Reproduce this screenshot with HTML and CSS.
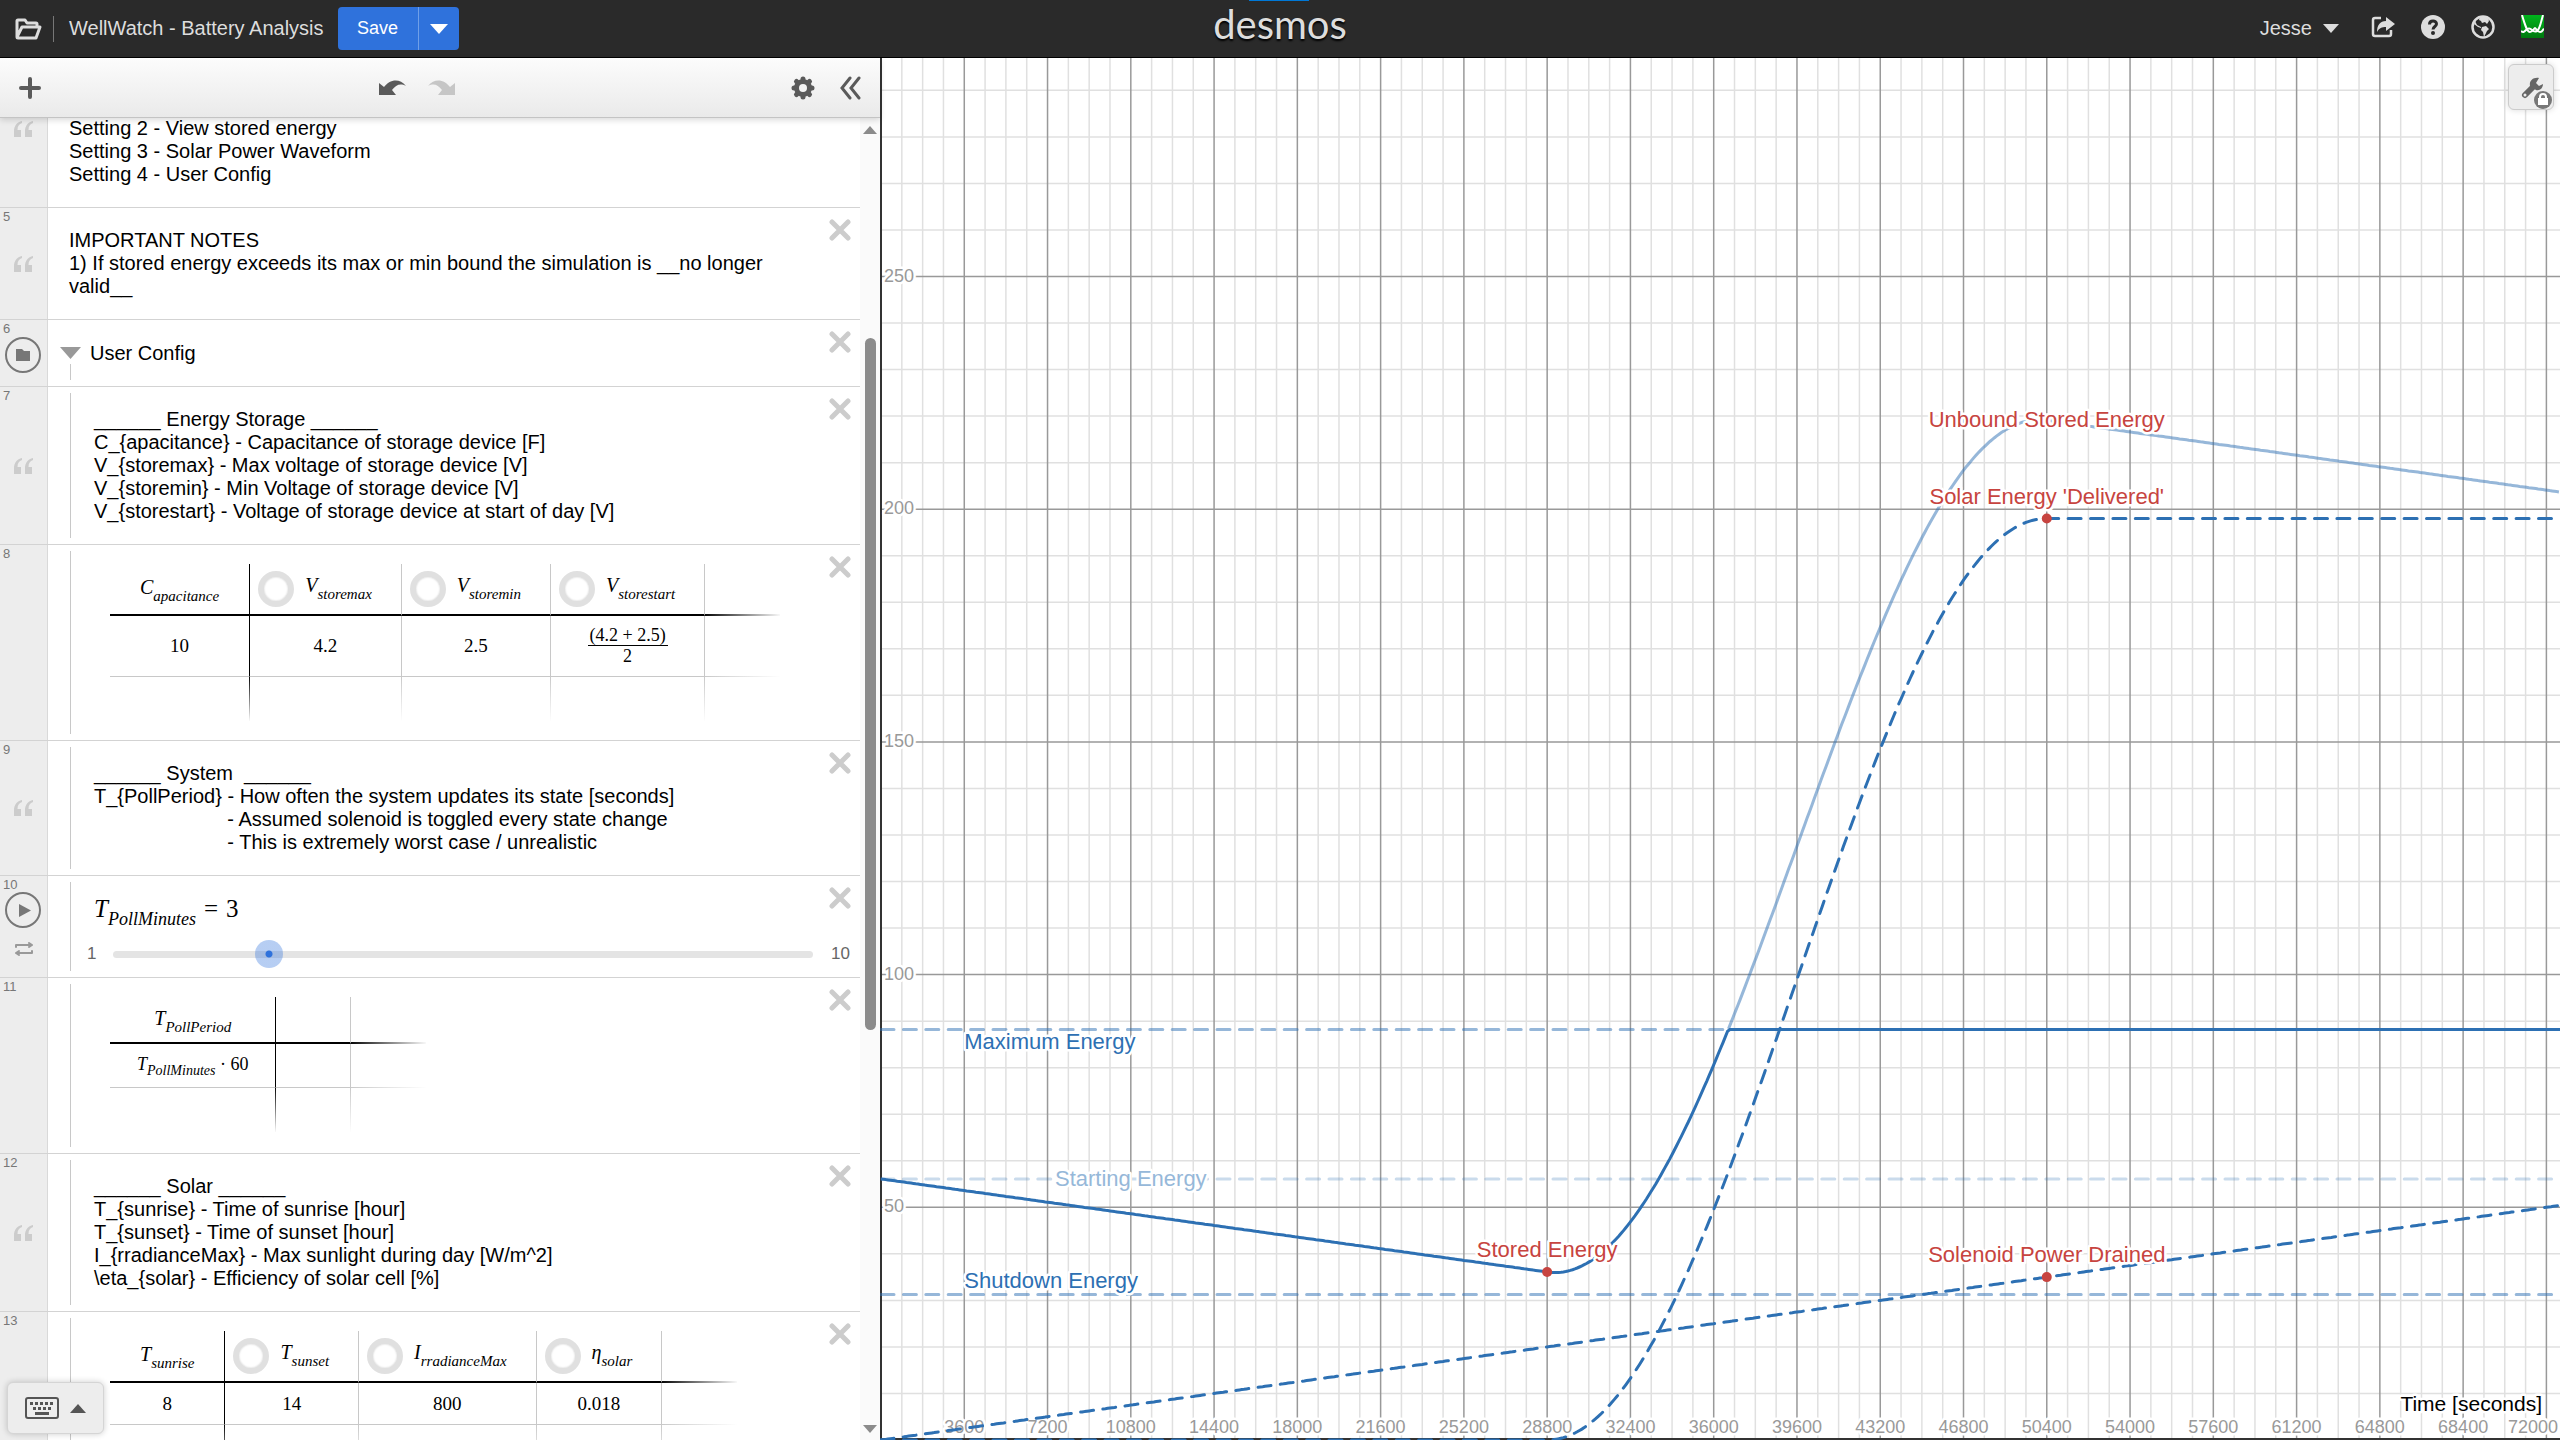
FILE: index.html
```
<!DOCTYPE html>
<html lang="en">
<head>
    <meta charset="UTF-8">
    <meta name="viewport" content="width=device-width, initial-scale=1.0">
    <title>WellWatch - Battery Analysis</title>
    <link rel="stylesheet" href="styles.css">
</head>
<body>
    <!-- Shared icons -->
    <svg class="sprite" aria-hidden="true">
        <symbol id="close" viewBox="0 0 22 22"><path d="M3 3L19 19M19 3L3 19" stroke="currentColor" stroke-width="5" stroke-linecap="round"/></symbol>
        <symbol id="quote" viewBox="0 0 19 16"><path d="M8 0C3 1 0 5 0 10v6h7V9H3.500C3.500 5 5 3 8 2zM19 0c-5 1-8 5-8 10v6h7V9h-3.500c0-4 1.500-6 4.500-7z" fill="currentColor"/></symbol>
    </svg>

    <header class="header">
        <div class="accent"></div>
        <div class="header-left">
            <button class="icon-button" aria-label="Open graph">
                <svg width="28" height="22" viewBox="0 0 28 22" fill="none" stroke="currentColor" stroke-width="3" stroke-linejoin="round"><path d="M3 19V3q0-1 1-1h7l2 3h9q1 0 1 1v3M3 19L8 9h18l-4 11H4q-1 0-1-1z"/></svg>
            </button>
            <span class="divider"></span>
            <span class="graph-title">WellWatch - Battery Analysis</span>
            <div class="save-group">
                <button class="save">Save</button>
                <button class="save-more" aria-label="More save options"><svg width="18" height="10" viewBox="0 0 18 10"><path d="M0 0h18L9 10z" fill="currentColor"/></svg></button>
            </div>
        </div>
        <div class="logo">desmos</div>
        <div class="header-right">
            <button class="user">Jesse <svg width="16" height="9" viewBox="0 0 16 9"><path d="M0 0h16L8 9z" fill="currentColor"/></svg></button>
            <button class="icon-button" aria-label="Share">
                <svg width="24" height="24" viewBox="0 0 24 24"><path d="M10 3H4Q2 3 2 5v14q0 2 2 2h14q2 0 2-2v-4" fill="none" stroke="currentColor" stroke-width="2.500"/><path d="M15 2l9 7-9 7v-4c-4 0-7 1-9 5 0-7 3-11 9-11z" fill="currentColor"/></svg>
            </button>
            <button class="icon-button" aria-label="Help">
                <svg width="24" height="24" viewBox="0 0 24 24"><circle cx="12" cy="12" r="12" fill="currentColor"/><path d="M8.500 9.500C8.500 5 15.500 5 15.500 9c0 2.500-3.500 2.500-3.500 5.500" fill="none" stroke="#2a2a2a" stroke-width="3"/><circle cx="12" cy="18" r="2" fill="#2a2a2a"/></svg>
            </button>
            <button class="icon-button" aria-label="Language">
                <svg width="24" height="24" viewBox="0 0 24 24"><circle cx="12" cy="12" r="10.500" fill="none" stroke="currentColor" stroke-width="2.500"/><path d="M9 1l5 1 3 1 1 3-2 3-2-2-3 1-1-2-2-1zM4 6l2 4 4 2 0 1-3-1-4-3zM11 12l4-1 3 3-2 2-3 6-1-5-2-2z" fill="currentColor"/></svg>
            </button>
            <a class="avatar" href="#" aria-label="Desmos">
                <svg width="23" height="23" viewBox="0 0 23 23" fill="none" stroke="#fff" stroke-width="2"><defs><linearGradient id="green" x1="0" y1="0" x2="0" y2="1"><stop offset="0" stop-color="#00b51c"/><stop offset="1" stop-color="#00790f"/></linearGradient></defs><path d="M0 0h23v23H0z" fill="url(#green)" stroke="none"/><path d="M1 0C4 10 6 17 9 17s4-4 5-4 2 4 5 4 2-2 4-3M0 16c2 2 3 1 5-1s4-2 6 0 3 2 5 1C19 14 20 7 22 0"/></svg>
            </a>
        </div>
    </header>

    <main class="calculator">
        <section class="panel">
            <div class="toolbar">
                <button class="tool" aria-label="Add item"><svg width="24" height="24" viewBox="0 0 24 24"><path d="M12 3v18M3 12h18" stroke="currentColor" stroke-width="4" stroke-linecap="round"/></svg></button>
                <div class="history">
                    <button class="tool" aria-label="Undo"><svg width="27" height="17" viewBox="0 0 27 17"><path d="M0 3l5 4C10 0 20-3 27 6 21 3 17 5 13 10l4 5H0z" fill="currentColor"/></svg></button>
                    <button class="tool disabled" aria-label="Redo"><svg width="27" height="17" viewBox="0 0 27 17"><path d="M27 3l-5 4C17 0 7-3 0 6c6-3 10-1 14 4l-4 5h17z" fill="currentColor"/></svg></button>
                </div>
                <div class="panel-actions">
                    <button class="tool" aria-label="Edit list"><svg width="24" height="24" viewBox="-12 -12 24 24"><path d="M0-9V9M-9 0H9M-6.500-6.500L6.500 6.500M6.500-6.500L-6.500 6.500" stroke="currentColor" stroke-width="5" stroke-linecap="round"/><circle r="6.500" fill="none" stroke="currentColor" stroke-width="5"/><circle r="4" fill="#f3f3f3"/></svg></button>
                    <button class="tool" aria-label="Hide list"><svg width="22" height="24" viewBox="0 0 22 24"><path d="M11 2L3 12l8 10M20 2l-8 10 8 10" fill="none" stroke="currentColor" stroke-width="3" stroke-linecap="round"/></svg></button>
                </div>
            </div>

            <div class="expressions">
                <div class="list">
                    <article class="item scrolled">
                        <div class="gutter"><svg class="quote"><use href="#quote"/></svg></div>
                        <div class="body">
                            <p class="note">Setting 2 - View stored energy
Setting 3 - Solar Power Waveform
Setting 4 - User Config</p>
                        </div>
                    </article>

                    <article class="item">
                        <div class="gutter"><span class="number">5</span><svg class="quote"><use href="#quote"/></svg></div>
                        <div class="body">
                            <p class="note">IMPORTANT NOTES
1) If stored energy exceeds its max or min bound the simulation is __no longer valid__</p>
                        </div>
                        <button class="close" aria-label="Delete 5"><svg><use href="#close"/></svg></button>
                    </article>

                    <article class="item folder">
                        <div class="gutter"><span class="number">6</span>
                            <button class="round" aria-label="Hide this folder"><svg width="14" height="12" viewBox="0 0 14 12"><path d="M0 0h6l2 2h6v10H0z" fill="currentColor"/></svg></button>
                        </div>
                        <div class="body">
                            <button class="arrow" aria-label="Collapse folder"><svg width="21" height="12" viewBox="0 0 21 12"><path d="M0 0h21L10.500 12z" fill="currentColor"/></svg></button>
                            <span>User Config</span>
                        </div>
                        <button class="close" aria-label="Delete 6"><svg><use href="#close"/></svg></button>
                    </article>

                    <article class="item nested">
                        <div class="gutter"><span class="number">7</span><svg class="quote"><use href="#quote"/></svg></div>
                        <div class="body">
                            <p class="note">______ Energy Storage ______
C_{apacitance} - Capacitance of storage device [F]
V_{storemax} - Max voltage of storage device [V]
V_{storemin} - Min Voltage of storage device [V]
V_{storestart} - Voltage of storage device at start of day [V]</p>
                        </div>
                        <button class="close" aria-label="Delete 7"><svg><use href="#close"/></svg></button>
                    </article>

                    <article class="item nested">
                        <div class="gutter"><span class="number">8</span></div>
                        <div class="body">
                            <table class="data tall">
                                <thead>
                                    <tr>
                                        <th><i>C<sub>apacitance</sub></i></th>
                                        <th><button class="plot" aria-label="Plot V storemax"></button><i>V<sub>storemax</sub></i></th>
                                        <th><button class="plot" aria-label="Plot V storemin"></button><i>V<sub>storemin</sub></i></th>
                                        <th><button class="plot" aria-label="Plot V storestart"></button><i>V<sub>storestart</sub></i></th>
                                        <th></th>
                                    </tr>
                                </thead>
                                <tbody>
                                    <tr>
                                        <td>10</td><td>4.2</td><td>2.5</td>
                                        <td><span class="fraction"><span>(4.2 + 2.5)</span><span>2</span></span></td>
                                        <td></td>
                                    </tr>
                                    <tr><td></td><td></td><td></td><td></td><td></td></tr>
                                </tbody>
                            </table>
                        </div>
                        <button class="close" aria-label="Delete 8"><svg><use href="#close"/></svg></button>
                    </article>

                    <article class="item nested">
                        <div class="gutter"><span class="number">9</span><svg class="quote"><use href="#quote"/></svg></div>
                        <div class="body">
                            <p class="note">______ System  ______
T_{PollPeriod} - How often the system updates its state [seconds]
                        - Assumed solenoid is toggled every state change
                        - This is extremely worst case / unrealistic</p>
                        </div>
                        <button class="close" aria-label="Delete 9"><svg><use href="#close"/></svg></button>
                    </article>

                    <article class="item nested">
                        <div class="gutter"><span class="number">10</span>
                            <button class="round play" aria-label="Play"><svg width="12" height="13" viewBox="0 0 12 13"><path d="M0 0l12 6.500L0 13z" fill="currentColor"/></svg></button>
                            <button class="loop" aria-label="Animation mode"><svg width="18" height="14" viewBox="0 0 18 14" fill="none" stroke="currentColor" stroke-width="2" stroke-linecap="round" stroke-linejoin="round"><path d="M1 5V3h15M14 1l3 2-3 2M17 9v2H2M4 9l-3 2 3 2"/></svg></button>
                        </div>
                        <div class="body slider-body">
                            <div class="formula"><i>T<sub>PollMinutes</sub></i><span class="equals">=</span>3</div>
                            <div class="slider">
                                <label for="poll">1</label>
                                <div class="track"><input type="range" id="poll" min="1" max="10" value="3"></div>
                                <span>10</span>
                            </div>
                        </div>
                        <button class="close" aria-label="Delete 10"><svg><use href="#close"/></svg></button>
                    </article>

                    <article class="item nested">
                        <div class="gutter"><span class="number">11</span></div>
                        <div class="body">
                            <table class="data compact">
                                <thead>
                                    <tr><th><i>T<sub>PollPeriod</sub></i></th><th></th><th></th></tr>
                                </thead>
                                <tbody>
                                    <tr><td><i>T<sub>PollMinutes</sub></i> · 60</td><td></td><td></td></tr>
                                    <tr><td></td><td></td><td></td></tr>
                                </tbody>
                            </table>
                        </div>
                        <button class="close" aria-label="Delete 11"><svg><use href="#close"/></svg></button>
                    </article>

                    <article class="item nested">
                        <div class="gutter"><span class="number">12</span><svg class="quote"><use href="#quote"/></svg></div>
                        <div class="body">
                            <p class="note">______ Solar ______
T_{sunrise} - Time of sunrise [hour]
T_{sunset} - Time of sunset [hour]
I_{rradianceMax} - Max sunlight during day [W/m^2]
\eta_{solar} - Efficiency of solar cell [%]</p>
                        </div>
                        <button class="close" aria-label="Delete 12"><svg><use href="#close"/></svg></button>
                    </article>

                    <article class="item nested">
                        <div class="gutter"><span class="number">13</span></div>
                        <div class="body">
                            <table class="data">
                                <thead>
                                    <tr>
                                        <th><i>T<sub>sunrise</sub></i></th>
                                        <th><button class="plot" aria-label="Plot T sunset"></button><i>T<sub>sunset</sub></i></th>
                                        <th><button class="plot" aria-label="Plot I rradianceMax"></button><i>I<sub>rradianceMax</sub></i></th>
                                        <th><button class="plot" aria-label="Plot eta solar"></button><i>η<sub>solar</sub></i></th>
                                        <th></th>
                                    </tr>
                                </thead>
                                <tbody>
                                    <tr><td>8</td><td>14</td><td>800</td><td>0.018</td><td></td></tr>
                                    <tr><td></td><td></td><td></td><td></td><td></td></tr>
                                </tbody>
                            </table>
                        </div>
                        <button class="close" aria-label="Delete 13"><svg><use href="#close"/></svg></button>
                    </article>
                </div>

                <!-- Scrollbar -->
                <div class="scrollbar">
                    <svg width="14" height="8" viewBox="0 0 14 8"><path d="M0 8h14L7 0z" fill="currentColor"/></svg>
                    <div class="rail"><span class="before"></span><span class="thumb"></span><span class="after"></span></div>
                    <svg width="14" height="8" viewBox="0 0 14 8"><path d="M0 0h14L7 8z" fill="currentColor"/></svg>
                </div>
            </div>

            <button class="keypad" aria-label="Show keypad">
                <svg width="34" height="22" viewBox="0 0 34 22"><rect x="1" y="1" width="32" height="20" rx="2" fill="none" stroke="currentColor" stroke-width="2"/><path d="M5 6.500h24M8 11.500h18" stroke="currentColor" stroke-width="3" stroke-dasharray="3 2"/><path d="M10 16.500h14" stroke="currentColor" stroke-width="3"/></svg>
                <svg width="16" height="9" viewBox="0 0 16 9"><path d="M0 9h16L8 0z" fill="currentColor"/></svg>
            </button>
        </section>

        <section class="graph">
            <svg id="plot" role="img" aria-label="Stored energy over time"></svg>
            <button class="settings" aria-label="Graph settings">
                <svg width="32" height="32" viewBox="0 0 32 32"><path d="M5 18L13 10" stroke="currentColor" stroke-width="6" stroke-linecap="round"/><path d="M19 1c-6-1-10 3-9 8l6 4c4 1 7-2 7-6l-4 2-3-3z" fill="currentColor"/><circle cx="5" cy="18" r="1.500" fill="#ededed"/><circle cx="23" cy="23" r="9" fill="#777"/><path d="M20 22v-2q0-3 3-3t3 3v2" fill="none" stroke="#fff" stroke-width="2"/><path d="M18 21h10v7H18z" fill="#fff"/></svg>
            </button>
        </section>
    </main>

    <script src="script.js"></script>
</body>
</html>
```
FILE: styles.css
```
* {
    box-sizing: border-box;
}
body {
    font-family: "Liberation Sans", Arial, sans-serif;
    font-size: 20px;
    margin: 0;
    height: 100vh;
    color: #000;
    display: flex;
    flex-direction: column;
    overflow: hidden;
}
button {
    font: inherit;
    color: inherit;
    background: none;
    border: none;
    padding: 0;
    cursor: pointer;
}
button svg {
    display: block;
}
.sprite {
    display: none;
}

/* Header */
.header {
    position: relative;
    flex: none;
    display: grid;
    grid-template-columns: 1fr auto 1fr;
    align-items: center;
    height: 58px;
    background: #2a2a2a;
    border-bottom: 1px solid #000;
    color: #ddd;
}
.accent {
    position: absolute;
    top: 0;
    left: 50%;
    width: 60px;
    height: 1px;
    margin-left: -31px;
    background: #0078d7;
}
.header-left {
    display: flex;
    align-items: center;
    padding-left: 14px;
}
.divider {
    width: 1px;
    height: 26px;
    margin: 0 15px 0 11px;
    background: #777;
}
.save-group {
    display: flex;
    height: 43px;
    margin-left: 14px;
    background: #2f72dc;
    border-radius: 4px;
    color: #fff;
}
.save {
    width: 80px;
    font-size: 18px;
}
.save-more {
    width: 41px;
    border-left: 1px solid #6f9fe8;
    display: flex;
    align-items: center;
    justify-content: center;
}
.logo {
    font-family: Lato, sans-serif;
    font-size: 40px;
    line-height: 40px;
    padding-bottom: 10px;
    text-shadow: 0 2px 2px #000;
}
.header-right {
    display: flex;
    align-items: center;
    justify-content: flex-end;
    gap: 26px;
    padding: 0 16px 4px 0;
}
.user {
    display: flex;
    align-items: center;
    gap: 11px;
    margin-right: 6px;
    padding-top: 4px;
}
.avatar svg {
    display: block;
}

/* Expression panel */
.calculator {
    flex: 1;
    min-height: 0;
    display: grid;
    grid-template-columns: 11fr 21fr;
    grid-template-rows: 100%;
}
.panel {
    position: relative;
    display: flex;
    flex-direction: column;
    min-width: 0;
}
.toolbar {
    z-index: 1;
    flex: none;
    display: grid;
    grid-template-columns: 1fr auto 1fr;
    align-items: center;
    height: 60px;
    padding: 1px 19px 0 18px;
    background: linear-gradient(#fcfcfc, #eaeaea);
    border-bottom: 1px solid #c4c4c4;
    box-shadow: 0 2px 6px rgba(0, 0, 0, 0.15);
    color: #5a5a5a;
}
.history {
    display: flex;
    gap: 22px;
    margin-right: 46px;
}
.panel-actions {
    display: flex;
    justify-content: flex-end;
    gap: 24px;
}
.disabled {
    color: #c6c6c6;
}
.expressions {
    flex: 1;
    min-height: 0;
    display: flex;
}
.list {
    flex: 1;
    overflow: hidden;
}
.item {
    position: relative;
    display: flex;
    border-bottom: 1px solid #d3d3d3;
    background: #fff;
}
.gutter {
    position: relative;
    flex: none;
    width: 48px;
    background: #ededed;
    border-right: 1px solid #d9d9d9;
    color: #777;
    display: flex;
    align-items: center;
    justify-content: center;
}
.number {
    position: absolute;
    top: 2px;
    left: 3px;
    font-size: 13px;
    line-height: 14px;
}
.quote {
    width: 19px;
    height: 16px;
    color: #ccc;
}
.round {
    width: 36px;
    height: 36px;
    margin-right: 1px;
    border: 2px solid #777;
    border-radius: 50%;
    display: flex;
    align-items: center;
    justify-content: center;
}
.play {
    padding-left: 4px;
}
.body {
    flex: 1;
    padding: 21px 50px 21px 21px;
}
.note {
    margin: 0;
    line-height: 23px;
    white-space: pre-wrap;
}
.close {
    position: absolute;
    top: 11px;
    right: 9px;
    color: #ccc;
}
.close svg {
    width: 22px;
    height: 22px;
}
.scrolled {
    margin-top: -68px;
    min-height: 158px;
}
.scrolled .body {
    align-self: flex-end;
    padding-top: 0;
}
.nested .body {
    padding-left: 46px;
}
.nested::before,
.folder::before {
    content: "";
    position: absolute;
    top: 6px;
    bottom: 6px;
    left: 70px;
    width: 1px;
    background: #c8c8c8;
}
.folder::before {
    top: 44px;
}
.folder .body {
    display: flex;
    align-items: center;
    gap: 9px;
    padding-left: 12px;
    line-height: 24px;
}
.folder .round {
    margin-top: 4px;
}
.arrow {
    color: #999;
}

/* Formulas and tables */
.formula,
.data {
    font-family: "Liberation Serif", "Times New Roman", serif;
}
.formula {
    padding-left: 7px;
    font-size: 25px;
    line-height: 30px;
}
.equals {
    margin: 0 8px;
}
sub {
    font-size: 15px;
    line-height: 0;
    vertical-align: -7px;
}
.formula sub {
    font-size: 18px;
    vertical-align: -8px;
}
.data {
    margin: -2px 0 -2px 16px;
    border-spacing: 0;
    font-size: 19px;
    white-space: nowrap;
}
.data th,
.data td {
    height: 42px;
    padding: 0 29px;
    border: 0 solid #c8c8c8;
    border-width: 0 1px 1px 0;
    text-align: center;
    font-weight: normal;
}
.data th {
    height: 52px;
    padding-bottom: 3px;
    border-bottom: 2px solid #000;
    font-size: 20px;
}
.data th:first-child,
.data td:first-child {
    border-right-color: #000;
}
.data th:first-child {
    padding: 0 30px 3px;
}
.data th:nth-last-child(2):not(:first-child) {
    min-width: 75px;
}
.data th:last-child,
.data td:last-child {
    border-right: none;
    border-image: linear-gradient(to right, #c8c8c8, transparent) 1;
    padding: 0;
    width: 75px;
}
.data th:last-child {
    border-image: linear-gradient(to right, #000, transparent) 2;
}
.data tr:last-child td {
    height: 44px;
    border-bottom: none;
    border-image: linear-gradient(#c8c8c8, transparent) 1;
}
.data tr:last-child td:first-child {
    border-image: linear-gradient(#000, transparent) 1;
}
.data tr:last-child td:last-child {
    border-image: none;
}
.tall tbody tr:first-child td {
    height: 61px;
}
.compact {
    margin-bottom: 0;
}
.compact th {
    height: 47px;
}
.compact td {
    height: 44px;
    padding-bottom: 3px;
    font-size: 18px;
}
.compact td:first-child {
    padding: 0 27px 3px;
}
.compact td sub {
    font-size: 14px;
    vertical-align: -5px;
}
.plot {
    width: 36px;
    height: 36px;
    margin: 3px 11px 0 -21px;
    border: 6px solid #e0e0e0;
    border-radius: 50%;
    background: #fff;
    box-shadow: inset 0 0 2px #ccc;
    vertical-align: middle;
}
.fraction {
    display: inline-flex;
    flex-direction: column;
    margin: 0 -10px;
    padding-bottom: 2px;
    font-size: 18px;
    line-height: 20px;
}
.fraction span:first-child {
    padding: 0 2px;
    border-bottom: 1px solid #000;
}

/* Slider */
.nested .slider-body {
    padding: 18px 10px 9px 39px;
}
.slider {
    display: flex;
    align-items: center;
    margin-top: 16px;
    height: 28px;
    font-size: 17px;
    color: #666;
}
.track {
    flex: 1;
    display: flex;
    align-items: center;
    height: 7px;
    margin: 0 18px 0 17px;
    background: #e4e4e4;
    border-radius: 4px;
}
.track input {
    appearance: none;
    flex: 1;
    height: 28px;
    margin: 0 -14px;
    background: none;
}
.track input::-webkit-slider-thumb {
    appearance: none;
    width: 28px;
    height: 28px;
    border-radius: 50%;
    background: radial-gradient(circle, #2f72dc 3px, rgba(47, 114, 220, 0.35) 4px);
}
.loop {
    position: absolute;
    bottom: 21px;
    left: 15px;
    color: #999;
}
.play {
    margin-bottom: 33px;
}

/* Scrollbar */
.scrollbar {
    flex: none;
    width: 20px;
    display: flex;
    flex-direction: column;
    align-items: center;
    padding: 8px 0 7px;
    background: #fafafa;
    color: #8b8b8b;
}
.rail {
    flex: 1;
    display: flex;
    flex-direction: column;
    padding: 3px 0;
}
.rail .before {
    flex: 201;
}
.rail .thumb {
    flex: 691;
    width: 11px;
    background: #8b8b8b;
    border-radius: 6px;
}
.rail .after {
    flex: 391;
}
.keypad {
    position: absolute;
    left: 7px;
    bottom: 6px;
    height: 52px;
    padding: 0 17px;
    display: flex;
    align-items: center;
    gap: 11px;
    background: #ededed;
    border: 1px solid #d5d5d5;
    border-radius: 6px;
    box-shadow: 0 0 6px rgba(0, 0, 0, 0.2);
    color: #555;
}

/* Graph */
.graph {
    position: relative;
    min-width: 0;
    overflow: hidden;
}
#plot {
    display: block;
    width: 100%;
    height: 100%;
}
.settings {
    position: absolute;
    top: 6px;
    right: 6px;
    width: 46px;
    height: 46px;
    padding: 11px 0 0 11px;
    background: #ededed;
    border: 1px solid #ccc;
    border-radius: 6px;
    box-shadow: 0 0 6px rgba(0, 0, 0, 0.15);
    color: #666;
}
.minor {
    stroke: #e0e0e0;
    stroke-width: 1.5px;
}
.major {
    stroke: #999;
    stroke-width: 1.5px;
}
.axis {
    stroke: #333;
    stroke-width: 2px;
}
.curve {
    fill: none;
    stroke: #2d70b3;
    stroke-width: 3px;
}
.dashed {
    stroke-dasharray: 13 9.4;
    stroke-linecap: round;
}
.half {
    opacity: 0.5;
}
.faint {
    opacity: 0.25;
}
.point {
    fill: #c74440;
}
#plot text {
    font-size: 22px;
    stroke: #fff;
    stroke-width: 5px;
    stroke-linejoin: round;
    paint-order: stroke;
}
#plot .tick {
    font-size: 18px;
    fill: #999;
}
#plot .time {
    font-size: 21px;
    fill: #000;
}
.middle {
    text-anchor: middle;
}
.end {
    text-anchor: end;
}
.red {
    fill: #c74440;
}
.blue {
    fill: #2d70b3;
}
.pale {
    fill: #96b8d9;
}
```
FILE: script.js
```
const plot = document.getElementById("plot");

// Simulation values
const sunrise = 8 * 3600;
const sunset = 14 * 3600;
const maxEnergy = 88.2;
const startEnergy = 56.1;
const shutdownEnergy = 31.25;

// Viewport scale
const stepX = 83.27 / 3600;
const stepY = 4.654;

function drained(t) {
    return 35 * t / sunset;
}

function delivered(t) {
    if (t < sunrise) return 0;
    if (t > sunset) return 198;
    return 99 * (1 - Math.cos(Math.PI * (t - sunrise) / (sunset - sunrise)));
}

function unbound(t) {
    return startEnergy - drained(t) + delivered(t);
}

function draw() {
    const w = plot.clientWidth;
    const h = plot.clientHeight;
    const x = t => 1 + t * stepX;
    const y = e => h - e * stepY;
    const end = w / stepX;
    let out = "";

    const line = (x1, y1, x2, y2, cls) => {
        out += `<line x1="${x1}" y1="${y1}" x2="${x2}" y2="${y2}" class="${cls}"/>`;
    };
    const text = (px, py, cls, label) => {
        out += `<text x="${px}" y="${py}" class="${cls}">${label}</text>`;
    };
    const curve = (fn, from, to, cls) => {
        let d = "";
        for (let t = from; t <= to; t += 100) {
            d += `${d ? "L" : "M"}${x(t).toFixed(1)} ${y(fn(t)).toFixed(1)}`;
        }
        out += `<path d="${d}" class="curve ${cls}"/>`;
    };

    // Grid
    for (let t = 900; x(t) < w; t += 900) {
        if (t % 3600) line(x(t), 0, x(t), h, "minor");
    }
    for (let e = 10; y(e) > 0; e += 10) {
        if (e % 50) line(0, y(e), w, y(e), "minor");
    }
    for (let t = 3600; x(t) < w; t += 3600) line(x(t), 0, x(t), h, "major");
    for (let e = 50; y(e) > 0; e += 50) line(0, y(e), w, y(e), "major");
    line(1, 0, 1, h, "axis");
    line(0, h - 1, w, h - 1, "axis");

    // Axis numbers
    for (let t = 3600; x(t) < w; t += 3600) {
        text(Math.min(x(t), w - 27), h - 7, "tick middle", t);
    }
    for (let e = 50; y(e) > 0; e += 50) text(4, y(e) + 5, "tick", e);
    text(w - 18, h - 29, "time end", "Time [seconds]");

    // Bounds
    curve(() => maxEnergy, 0, end, "dashed half");
    curve(() => startEnergy, 0, end, "dashed faint");
    curve(() => shutdownEnergy, 0, end, "dashed half");

    // Energy curves
    let full = sunrise;
    while (unbound(full) < maxEnergy) full += 20;
    curve(unbound, full, end, "half");
    curve(t => t < full ? unbound(t) : maxEnergy, 0, end, "");
    curve(delivered, 0, end, "dashed");
    curve(drained, 0, end, "dashed");

    [[sunrise, unbound], [sunset, delivered], [sunset, drained]].forEach(([t, fn]) => {
        out += `<circle cx="${x(t)}" cy="${y(fn(t))}" r="5" class="point"/>`;
    });

    // Labels
    text(x(3600), y(maxEnergy) + 19, "blue", "Maximum Energy");
    text(x(3600), y(shutdownEnergy) - 7, "blue", "Shutdown Energy");
    text(x(10800), y(startEnergy) + 7, "pale middle", "Starting Energy");
    text(x(sunrise), y(unbound(sunrise)) - 15, "red middle", "Stored Energy");
    text(x(sunset), y(unbound(sunset)) + 7, "red middle", "Unbound Stored Energy");
    text(x(sunset), y(198) - 15, "red middle", "Solar Energy 'Delivered'");
    text(x(sunset), y(35) - 15, "red middle", "Solenoid Power Drained");

    plot.innerHTML = out;
}

draw();
window.addEventListener("resize", draw);
```
